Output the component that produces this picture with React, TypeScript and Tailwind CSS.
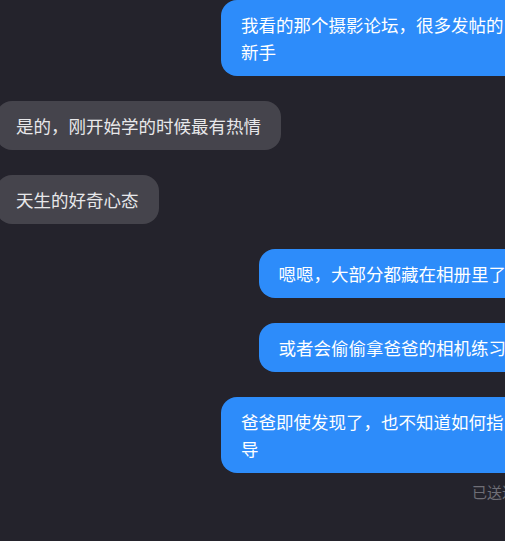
type Msg = { id: number; mine: boolean; text: string }

const MESSAGES: Msg[] = [
  { id: 1, mine: true, text: '我看的那个摄影论坛，很多发帖的新手' },
  { id: 2, mine: false, text: '是的，刚开始学的时候最有热情' },
  { id: 3, mine: false, text: '天生的好奇心态' },
  { id: 4, mine: true, text: '嗯嗯，大部分都藏在相册里了' },
  { id: 5, mine: true, text: '或者会偷偷拿爸爸的相机练习' },
  { id: 6, mine: true, text: '爸爸即使发现了，也不知道如何指导' },
]

export default function App() {
  return (
    <div
      className="w-[505px] h-[541px] overflow-hidden bg-[#24232c]"
      style={{ fontFamily: '"Noto Sans CJK SC", "Noto Sans", sans-serif' }}
    >
      <div className="w-[530px] ml-[-4px] flex flex-col gap-[25px]">
        {MESSAGES.map((m) => (
          <div key={m.id} className={m.mine ? 'flex justify-end' : 'flex justify-start'}>
            <div
              className={
                m.mine
                  ? 'max-w-[305px] rounded-2xl bg-[#2d8cfa] px-5 py-[11px] text-[17.5px] leading-[27px] text-white'
                  : 'max-w-[305px] rounded-2xl bg-[#45444c] px-5 py-[11px] text-[17.5px] leading-[27px] text-[#e8e8ea]'
              }
            >
              {m.text}
            </div>
          </div>
        ))}
        <div className="-mt-[17px] pr-[9px] text-right text-[15px] leading-[22px] text-[#6f6e76]">已送达</div>
      </div>
    </div>
  )
}
